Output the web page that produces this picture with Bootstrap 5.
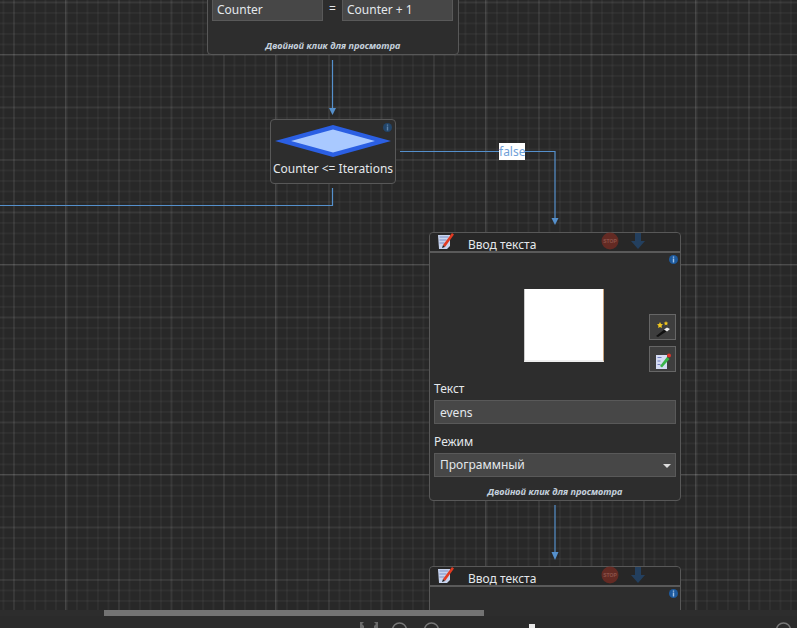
<!DOCTYPE html>
<html lang="ru">
<head>
    <meta charset="UTF-8">
    <meta name="viewport" content="width=device-width, initial-scale=1.0">
    <title>Редактор сценария</title>
    <link href="https://cdn.jsdelivr.net/npm/bootstrap@5.3.0/dist/css/bootstrap.min.css" rel="stylesheet">
    <style>
        html, body { height: 100%; margin: 0; overflow: hidden; background: #2d2d2d; }
        body { font-family: "Noto Sans", "Liberation Sans", sans-serif; color: #e4e8ec; }
        .app-wrap { height: 628px; display: flex; flex-direction: column; }
        .flow-canvas {
            position: relative;
            flex: 0 0 610px;
            overflow: hidden;
            background-color: #282828;
            background-image:
                linear-gradient(90deg, rgba(255,255,255,.1) 1px, transparent 1px),
                linear-gradient(rgba(255,255,255,.1) 1px, transparent 1px),
                linear-gradient(90deg, rgba(255,255,255,.04) 1.5px, transparent 1.5px),
                linear-gradient(rgba(255,255,255,.04) 1.5px, transparent 1.5px),
                linear-gradient(90deg, rgba(255,255,255,.035) 1.5px, transparent 1.5px),
                linear-gradient(rgba(255,255,255,.035) 1.5px, transparent 1.5px);
            background-size: 210px 210px, 210px 210px, 52.5px 52.5px, 52.5px 52.5px, 10.5px 10.5px, 10.5px 10.5px;
            background-position: 65px 54px, 65px 54px, 13px 1.5px, 13px 1.5px, 2.5px 1.5px, 2.5px 1.5px;
        }
        .wire-layer { position: absolute; left: 0; top: 0; width: 797px; height: 610px; }
        .flow-node {
            position: absolute;
            background: #2d2d2d;
            border: 1px solid #585858;
            border-radius: 4px;
            color: #e4e8ec;
        }
        .node-assign { left: 207px; top: -60px; width: 252px; height: 115px; }
        .node-cond { left: 270px; top: 119px; width: 126px; height: 65px; text-align: center; }
        .node-input { left: 429px; width: 252px; }
        .node-first { top: 232px; height: 269px; }
        .node-second { top: 566px; height: 120px; }
        .node-head {
            height: 20px;
            padding: 0 7px 2px;
            background: #272727;
            border-bottom: 2px solid #5a5a5a;
            border-radius: 4px 4px 0 0;
            font-size: 12px;
            line-height: 18px;
        }
        .node-title { margin-left: 13px; width: 133px; padding-top: 7px; }
        .head-icon { width: 18px; height: 18px; flex: none; }
        .dim-icon { width: 18px; height: 18px; flex: none; }
        .arrow-gap { margin-left: 10px; }
        .info-mark { position: absolute; width: 9px; height: 9px; }
        .info-cond { right: 3px; top: 3px; }
        .info-input { right: 2px; top: 2px; }
        .node-main { position: relative; height: 247px; padding: 0 4px; }
        .preview-row { height: 128px; position: relative; }
        .preview-box { position: absolute; left: 90px; top: 36px; width: 80px; height: 73px; background: #fff; border-right: 1px solid #c9a27a; border-bottom: 2px solid #eee; border-left: 1px solid #ccc; }
        .side-btn {
            position: absolute;
            left: 215px;
            width: 27px;
            height: 26px;
            padding: 0;
            background: #3e3e3e;
            border: 1px solid #666;
            border-radius: 0;
        }
        .side-btn svg { display: block; margin: 3px auto 0; width: 18px; height: 18px; }
        .btn-wand { top: 61px; }
        .btn-note { top: 93px; }
        .field-label { font-size: 12px; line-height: 16px; margin: 0 0 3px; color: #e4e8ec; }
        .field-ctl.form-control, .field-ctl.form-select {
            height: 24px;
            min-height: 24px;
            padding: 0 5px;
            font-size: 12px;
            line-height: 22px;
            border-radius: 0;
            background-color: #474747;
            border: 1px solid #595959;
            color: #e4e8ec;
            opacity: 1;
        }
        .field-ctl.form-select { background-image: none; }
        .select-wrap { position: relative; margin-top: 3px; }
        .select-caret { position: absolute; right: 5px; top: 11px; width: 0; height: 0; border-left: 4px solid transparent; border-right: 4px solid transparent; border-top: 4px solid #ddd; }
        .first-field { margin-bottom: 10px; }
        .hint-line {
            font-size: 9.2px;
            font-weight: 700;
            font-style: italic;
            color: #c3cfdb;
            text-align: center;
            line-height: 12px;
        }
        .node-hint { position: absolute; left: 0; right: 0; }
        .assign-hint { bottom: 2px; }
        .input-hint { top: 253px; }
        .assign-row { position: absolute; left: 4px; top: 56px; width: 241px; height: 24px; font-size: 12px; }
        .assign-row .field-ctl { width: 111px; padding: 0 4px; }
        .eq-mark { width: 19px; text-align: center; line-height: 24px; font-size: 12px; flex: none; }
        .cond-shape { display: block; margin: 5px 0 0 4px; width: 116px; height: 32px; }
        .cond-text { font-size: 12px; line-height: 16px; margin-top: 4px; white-space: nowrap; }
        .edge-label { position: absolute; left: 499px; top: 143px; width: 26px; height: 17px; background: #fff; color: #6f9fd8; font-size: 12px; line-height: 18px; text-align: center; }
        .h-scroll { flex: 0 0 6px; background: #2d2d2d; position: relative; }
        .h-thumb { position: absolute; left: 104px; top: 0; width: 380px; height: 6px; background: #737373; }
        .bottom-bar { flex: 0 0 12px; background: #2b2b2b; position: relative; overflow: hidden; }
        .bottom-bar svg { position: absolute; left: 0; top: 0; width: 797px; height: 12px; }
    </style>
</head>
<body>
<div class="app-wrap">
    <div class="flow-canvas">
        <svg class="wire-layer" viewBox="0 0 797 610" fill="none">
            <g stroke="#5590cc" stroke-width="1.2">
                <path d="M332.500 60V109"/>
                <path d="M400 151.500H555V219"/>
                <path d="M332.500 188V205.500H0"/>
                <path d="M555 505V553"/>
            </g>
            <g fill="#5590cc">
                <path d="M329 108h7l-3.500 7z"/>
                <path d="M551.500 218h7l-3.500 7z"/>
                <path d="M551.500 552h7l-3.500 8z"/>
            </g>
        </svg>

        <div class="flow-node node-assign">
            <div class="d-flex assign-row">
                <input class="form-control field-ctl" value="Counter" readonly>
                <div class="eq-mark">=</div>
                <input class="form-control field-ctl" value="Counter + 1" readonly>
            </div>
            <div class="hint-line node-hint assign-hint">Двойной клик для просмотра</div>
        </div>

        <div class="flow-node node-cond">
            <svg class="info-mark info-cond" viewBox="0 0 9 9"><circle cx="4.500" cy="4.500" r="4.500" fill="#22456a"/><path d="M3.800 1.500h1.400v1.200H3.800zM3.800 3.500h1.400v4H3.800z" fill="#5f83a8"/></svg>
            <svg class="cond-shape" viewBox="0 0 116 32">
                <path d="M0 16 58 0l58 16-58 16z" fill="#2b5fe3"/>
                <path d="M16 16 58 4.500 100 16 58 27.500z" fill="#a9c9ff"/>
            </svg>
            <div class="cond-text">Counter &lt;= Iterations</div>
        </div>

        <div class="edge-label">false</div>

        <div class="flow-node node-input node-first">
            <div class="node-head d-flex align-items-center">
                <svg class="head-icon" viewBox="0 0 18 18">
                    <path d="M1 3h12v11l-3 3H2z" fill="#c8d4ee"/>
                    <path d="M2.500 5h9M2.500 8h7M2.500 11h5" stroke="#7c8fc4"/>
                    <path d="M6 13 15 1l2 1.500L8 15z" fill="#e23b22"/>
                    <path d="M6 13l-1 3 3-1z" fill="#222"/>
                </svg>
                <div class="node-title">Ввод текста</div>
                <svg class="dim-icon" viewBox="0 0 18 18">
                    <circle cx="9" cy="9" r="8.500" fill="#632a23"/>
                    <text x="9" y="11" text-anchor="middle" font-size="5" font-weight="700" fill="#8a534a" font-family="Liberation Sans, sans-serif">STOP</text>
                </svg>
                <svg class="dim-icon arrow-gap" viewBox="0 0 18 18"><path d="M6 1h6v8h4l-7 8-7-8h4z" fill="#233f5e"/></svg>
            </div>
            <div class="node-main">
                <svg class="info-mark info-input" viewBox="0 0 9 9"><circle cx="4.500" cy="4.500" r="4.500" fill="#1d5a9e"/><path d="M3.800 1.500h1.400v1.200H3.800zM3.800 3.500h1.400v4H3.800z" fill="#a3c4e6"/></svg>
                <div class="preview-row">
                    <div class="preview-box"></div>
                    <button class="btn side-btn btn-wand" type="button">
                        <svg viewBox="0 0 18 18"><path d="M2 16 11 9l2 2-9 6z" fill="#111"/><path d="M10 9.500l3-2 3 1.500-3 2.500z" fill="#eee"/><path d="M6 2l1 2 2 .3-1.500 1.500.4 2.200L6 7 4.100 8l.4-2.200L3 4.300 5 4z" fill="#f2c81f"/><path d="M12 1l.7 1.500 1.600.2-1.200 1.100.3 1.600-1.400-.8-1.400.8.300-1.600-1.200-1.100 1.600-.2z" fill="#f2c81f"/></svg>
                    </button>
                    <button class="btn side-btn btn-note" type="button">
                        <svg viewBox="0 0 18 18"><path d="M2 3h11v14H2z" fill="#d5dcf4"/><path d="M3.500 5.500h4M3.500 9h3M3.500 12.500h3" stroke="#7280c0"/><path d="M6 14 13 5l2.500 2L8 15.500z" fill="#39b54a"/><circle cx="15" cy="3.500" r="2" fill="#e0352b"/></svg>
                    </button>
                </div>
                <label class="field-label d-block">Текст</label>
                <input class="form-control field-ctl first-field" value="evens" readonly>
                <label class="field-label d-block">Режим</label>
                <div class="select-wrap">
                    <select class="form-select field-ctl" disabled><option>Программный</option></select>
                    <span class="select-caret"></span>
                </div>
            </div>
            <div class="hint-line node-hint input-hint">Двойной клик для просмотра</div>
        </div>

        <div class="flow-node node-input node-second">
            <div class="node-head d-flex align-items-center">
                <svg class="head-icon" viewBox="0 0 18 18">
                    <path d="M1 3h12v11l-3 3H2z" fill="#c8d4ee"/>
                    <path d="M2.500 5h9M2.500 8h7M2.500 11h5" stroke="#7c8fc4"/>
                    <path d="M6 13 15 1l2 1.500L8 15z" fill="#e23b22"/>
                    <path d="M6 13l-1 3 3-1z" fill="#222"/>
                </svg>
                <div class="node-title">Ввод текста</div>
                <svg class="dim-icon" viewBox="0 0 18 18">
                    <circle cx="9" cy="9" r="8.500" fill="#632a23"/>
                    <text x="9" y="11" text-anchor="middle" font-size="5" font-weight="700" fill="#8a534a" font-family="Liberation Sans, sans-serif">STOP</text>
                </svg>
                <svg class="dim-icon arrow-gap" viewBox="0 0 18 18"><path d="M6 1h6v8h4l-7 8-7-8h4z" fill="#233f5e"/></svg>
            </div>
            <div class="node-main">
                <svg class="info-mark info-input" viewBox="0 0 9 9"><circle cx="4.500" cy="4.500" r="4.500" fill="#1d5a9e"/><path d="M3.800 1.500h1.400v1.200H3.800zM3.800 3.500h1.400v4H3.800z" fill="#a3c4e6"/></svg>
            </div>
        </div>
    </div>
    <div class="h-scroll"><div class="h-thumb"></div></div>
    <div class="bottom-bar">
        <svg viewBox="0 0 797 12" fill="none">
            <g fill="#6a6a6a">
                <path d="M360 6h4l-2 2 2 2v2h-4zM378 6h-4l2 2-2 2v2h4z"/>
            </g>
            <g stroke="#777" stroke-width="1.500">
                <circle cx="399.500" cy="14" r="7"/>
                <circle cx="431.500" cy="14" r="7"/>
                <circle cx="783.500" cy="14" r="7"/>
            </g>
            <rect x="529" y="8" width="6" height="4" fill="#e8e8e8"/>
        </svg>
    </div>
</div>
<script src="https://cdn.jsdelivr.net/npm/bootstrap@5.3.0/dist/js/bootstrap.bundle.min.js"></script>
</body>
</html>
